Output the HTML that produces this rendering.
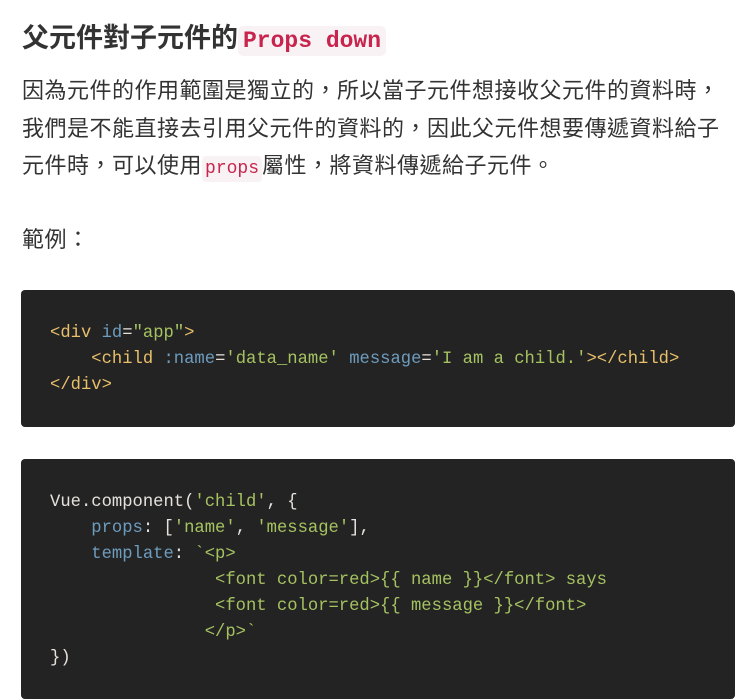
<!DOCTYPE html>
<html><head><meta charset="utf-8"><style>
body{margin:0;background:#fff;width:754px;height:689px;overflow:hidden;font-family:"Liberation Sans","Noto Sans CJK TC",sans-serif;color:#333}
h2{position:absolute;left:22px;top:18px;margin:0;font-size:27px;font-weight:bold;line-height:40px;white-space:nowrap}
h2 code{font-family:"Liberation Mono",monospace;font-size:23px;color:#c7254e;background:#f9f2f4;border-radius:5px;padding:2px 5px;font-weight:bold}
p{position:absolute;left:22px;margin:0;font-size:22px;line-height:37.5px;white-space:nowrap;letter-spacing:0.5px}
p code{font-family:"Liberation Mono",monospace;font-size:18px;color:#c7254e;background:#f9f2f4;border-radius:4px;padding:3px 3px;letter-spacing:0}
pre{position:absolute;left:21px;width:714px;margin:0;background:#232323;border-radius:4px;font-family:"Liberation Mono",monospace;font-size:17.2px;line-height:26px;color:#e6e1dc;padding:0 0 0 29px;box-sizing:border-box}
.t{color:#e8bf6a}.a{color:#6d9cbe}.s{color:#a5c261}
</style></head><body>
<h2>父元件對子元件的<code>Props down</code></h2>
<p style="top:72px">因為元件的作用範圍是獨立的，所以當子元件想接收父元件的資料時，<br>我們是不能直接去引用父元件的資料的，因此父元件想要傳遞資料給子<br>元件時，可以使用<code>props</code>屬性，將資料傳遞給子元件。</p>
<p style="top:221px">範例：</p>
<pre style="top:290px;height:137px;padding-top:31px"><span class="t">&lt;div</span> <span class="a">id</span>=<span class="s">"app"</span><span class="t">&gt;</span>
    <span class="t">&lt;child</span> <span class="a">:name</span>=<span class="s">'data_name'</span> <span class="a">message</span>=<span class="s">'I am a child.'</span><span class="t">&gt;&lt;/child&gt;</span>
<span class="t">&lt;/div&gt;</span></pre>
<pre style="top:459px;height:240px;padding-top:31px">Vue.component(<span class="s">'child'</span>, {
    <span class="a">props</span>: [<span class="s">'name'</span>, <span class="s">'message'</span>],
    <span class="a">template</span>: <span class="s">`&lt;p&gt;
                &lt;font color=red&gt;{{ name }}&lt;/font&gt; says
                &lt;font color=red&gt;{{ message }}&lt;/font&gt;
               &lt;/p&gt;`</span>
})</pre>
</body></html>
